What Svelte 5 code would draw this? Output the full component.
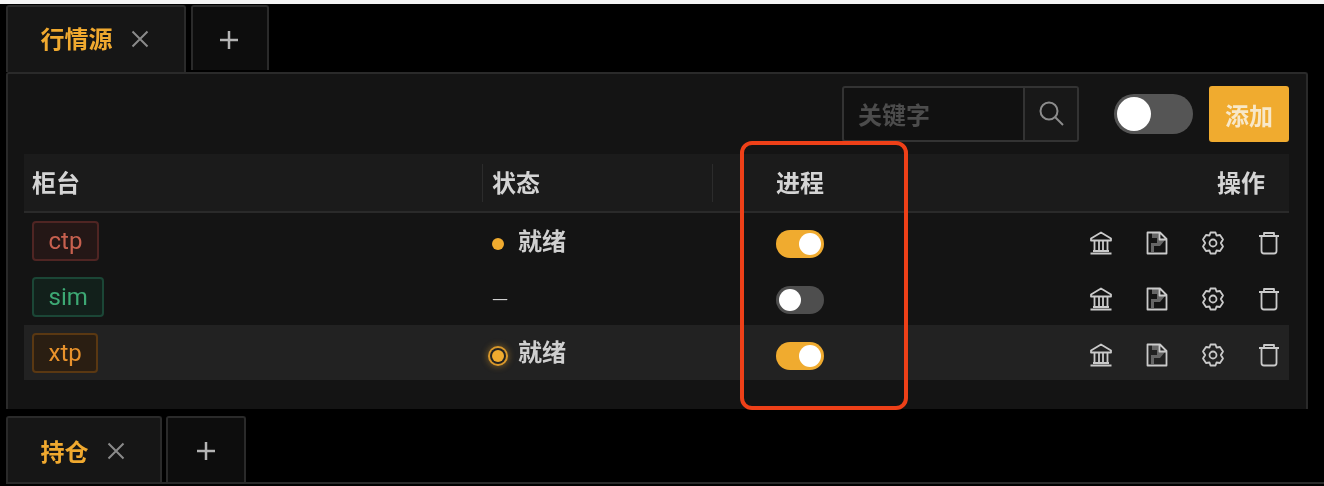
<script>
  const rows = [
    { name: "ctp", tone: "red", status: "ready", on: true },
    { name: "sim", tone: "green", status: "none", on: false },
    { name: "xtp", tone: "orange", status: "active", on: true, hover: true },
  ];
</script>

<div class="page">
  <div class="tabs">
    <div class="tab active first">
      <span class="tab-label">行情源</span>
      <svg class="close" viewBox="0 0 18 18"><path d="M1.500 1.500 16.500 16.500M16.500 1.500 1.500 16.500" /></svg>
    </div>
    <div class="tab add first-add">
      <svg class="plus" viewBox="0 0 20 20"><path d="M10 1V19M1 10H19" /></svg>
    </div>
  </div>

  <section class="panel">
    <div class="toolbar">
      <div class="search">
        <span class="placeholder">关键字</span>
        <span class="search-btn">
          <svg viewBox="0 0 26 26" width="26" height="26"><circle cx="11" cy="11" r="8.500" /><path d="M17 17 25 25" /></svg>
        </span>
      </div>
      <span class="big-switch"><i></i></span>
      <button class="add-btn">添加</button>
    </div>

    <div class="table">
      <div class="row head">
        <div class="cell">柜台</div>
        <div class="cell status sep">状态</div>
        <div class="cell proc sep">进程</div>
        <div class="cell ops-title">操作</div>
      </div>
      {#each rows as r}
        <div class="row body" class:hover={r.hover}>
          <div class="cell"><span class="tag {r.tone}">{r.name}</span></div>
          <div class="cell status">
            {#if r.status === "none"}
              <span class="dash">—</span>
            {:else}
              <span class="dot-box"><i class="dot" class:pulse={r.status === "active"}></i></span>
              <span class="status-text">就绪</span>
            {/if}
          </div>
          <div class="cell proc"><span class="switch" class:on={r.on}><i></i></span></div>
          <div class="cell ops">
            <svg viewBox="0 0 24 24"><path d="M12 1.500 22 7.500V9.500H2V7.500ZM4 20H20M1.500 22.500H22.500M5.500 10V19M10 10V19M14 10V19M18.500 10V19" /></svg>
            <svg viewBox="0 0 24 24"><path class="fill" d="M14 2V8H20V9L15 15H9V21H6V12H12V7H7V2Z" /><path d="M2.500 1.500H15L21.500 8V22.500H2.500ZM14.500 2V8.500H21" /></svg>
            <svg viewBox="0 0 24 24"><path d="M9.500 1.500H14.500L15.500 4.500 19 4 22 8.500 19.800 12 22 15.500 19 20 15.500 19.500 14.500 22.500H9.500L8.500 19.500 5 20 2 15.500 4.200 12 2 8.500 5 4 8.500 4.500Z" /><circle cx="12" cy="12" r="3.500" /></svg>
            <svg viewBox="0 0 24 24"><path d="M4.500 5V20Q4.500 22.500 7 22.500H17Q19.500 22.500 19.500 20V5M2 5H22M7 5V2H17V5" /></svg>
          </div>
        </div>
      {/each}
    </div>
  </section>

  <div class="tabs second">
    <div class="tab active second-tab">
      <span class="tab-label">持仓</span>
      <svg class="close" viewBox="0 0 18 18"><path d="M1.500 1.500 16.500 16.500M16.500 1.500 1.500 16.500" /></svg>
    </div>
    <div class="tab add second-add">
      <svg class="plus" viewBox="0 0 20 20"><path d="M10 1V19M1 10H19" /></svg>
    </div>
  </div>
  <div class="bottom-line"></div>

  <div class="highlight"></div>
</div>

<style>
  :global(body) {
    margin: 0;
    background: #000;
  }

  .page {
    position: relative;
    width: 1324px;
    height: 486px;
    overflow: hidden;
    background: #000;
    border-top: 4px solid #f4f4f4;
    box-sizing: border-box;
    font-family: "Noto Sans CJK SC", "Noto Sans", sans-serif;
    font-size: 24px;
    color: #d8d8d8;
    filter: blur(0.6px);
  }

  .tabs {
    display: flex;
    align-items: flex-start;
    height: 68px;
    padding: 1px 0 0 6px;
    box-sizing: border-box;
  }

  .tab {
    display: flex;
    align-items: center;
    justify-content: center;
    box-sizing: border-box;
    border: 2px solid #2a2a2a;
    border-bottom: none;
    border-radius: 3px 3px 0 0;
    background: #161616;
  }

  .tab.add {
    background: #0d0d0d;
  }

  .first {
    width: 180px;
    height: 67px;
    gap: 18px;
    padding-right: 3px;
  }

  .first-add {
    width: 78px;
    height: 65px;
    margin-left: 5px;
    padding-right: 2px;
  }

  .tab-label {
    color: #f0a92f;
    font-weight: 700;
    line-height: 1;
    margin-top: -3px;
  }

  .close {
    width: 18px;
    height: 18px;
    margin-top: -1px;
  }

  .close path {
    fill: none;
    stroke: #8a8a8a;
    stroke-width: 2;
  }

  .plus {
    width: 20px;
    height: 20px;
    margin-top: 2px;
  }

  .plus path {
    fill: none;
    stroke: #b4b4b4;
    stroke-width: 2.500;
  }

  .panel {
    box-sizing: border-box;
    width: 1302px;
    height: 337px;
    margin-left: 6px;
    padding: 0 17px 0 16px;
    border: 2px solid #2a2a2a;
    border-bottom: none;
    border-radius: 3px 3px 0 0;
    background: #141414;
  }

  .toolbar {
    display: flex;
    align-items: center;
    justify-content: flex-end;
    height: 80px;
    box-sizing: border-box;
  }

  .search {
    display: flex;
    box-sizing: border-box;
    width: 237px;
    height: 56px;
    border: 2px solid #333;
    border-radius: 3px;
    background: #111;
  }

  .placeholder {
    flex: 1;
    padding-left: 14px;
    color: #4c4c4c;
    line-height: 52px;
    font-weight: 700;
  }

  .search-btn {
    display: flex;
    align-items: center;
    justify-content: center;
    width: 52px;
    border-left: 2px solid #333;
    background: #181818;
  }

  .search-btn svg {
    fill: none;
    stroke: #8c8c8c;
    stroke-width: 2;
    margin-top: -3px;
  }

  .big-switch {
    display: block;
    position: relative;
    width: 79px;
    height: 40px;
    margin-left: 35px;
    border-radius: 20px;
    background: #555;
  }

  .big-switch i {
    position: absolute;
    left: 3px;
    top: 3px;
    width: 34px;
    height: 34px;
    border-radius: 50%;
    background: #fff;
  }

  .add-btn {
    width: 80px;
    height: 56px;
    margin-left: 16px;
    padding: 0;
    border: none;
    border-radius: 3px;
    background: #f0ab2f;
    color: #f8e8c8;
    font: 700 24px "Noto Sans CJK SC", sans-serif;
  }

  .table {
    width: 1265px;
  }

  .row {
    display: grid;
    grid-template-columns: 458px 230px 1fr 230px;
    align-items: center;
  }

  .head {
    height: 59px;
    border-bottom: 2px solid #2a2a2a;
    box-sizing: border-box;
    background: #1b1b1b;
    color: #d4d4d4;
    font-weight: 700;
  }

  .body {
    height: 56px;
  }

  .hover {
    background: #222;
    height: 55px;
  }

  .cell {
    padding-left: 8px;
    display: flex;
    align-items: center;
    position: relative;
  }

  .head .cell {
    line-height: 1;
    margin-top: -1px;
  }

  .status {
    padding-left: 10px;
  }

  .proc {
    padding-left: 64px;
  }

  .sep::before {
    content: "";
    position: absolute;
    left: 0;
    top: -6px;
    width: 1px;
    height: 38px;
    background: #2c2c2c;
  }

  .ops-title {
    justify-content: flex-end;
    padding-right: 24px;
  }

  .ops {
    justify-content: flex-end;
    gap: 32px;
    padding-right: 8px;
  }

  .ops svg {
    flex: none;
    width: 24px;
    height: 24px;
    margin-top: 4px;
    fill: none;
    stroke: #cacaca;
    stroke-width: 1.800;
    stroke-linejoin: round;
  }

  .ops svg .fill {
    fill: #666;
    stroke: none;
  }

  .tag {
    box-sizing: border-box;
    display: block;
    height: 40px;
    padding: 0 14.500px;
    border: 2px solid;
    border-radius: 4px;
    line-height: 36px;
    font-family: Roboto, sans-serif;
    font-size: 24px;
  }

  .red {
    color: #c7604f;
    background: #241716;
    border-color: #4f2523;
  }

  .green {
    color: #3da874;
    background: #12201b;
    border-color: #1b4636;
  }

  .orange {
    color: #e8922c;
    background: #2a1e12;
    border-color: #5a3812;
  }

  .dash {
    color: #d0d0d0;
    font-size: 18px;
    line-height: 1;
  }

  .dot-box {
    display: flex;
    align-items: center;
    justify-content: center;
    width: 12px;
    height: 12px;
    margin: 6px 14px 0 0;
  }

  .dot {
    flex: none;
    width: 12px;
    height: 12px;
    border-radius: 50%;
    background: #f0ab2f;
  }

  .pulse {
    box-shadow: 0 0 0 2px #222, 0 0 0 4px #d9982b, 0 0 6px 5px rgba(240, 171, 47, 0.35);
  }

  .status-text {
    font-weight: 700;
    color: #cfcfcf;
    line-height: 1;
    margin-top: -3px;
  }

  .switch {
    display: block;
    position: relative;
    width: 48px;
    height: 28px;
    border-radius: 14px;
    background: #4e4e4e;
    margin-top: 6px;
  }

  .switch i {
    position: absolute;
    left: 3px;
    top: 3px;
    width: 22px;
    height: 22px;
    border-radius: 50%;
    background: #fff;
  }

  .switch.on {
    background: #f0ab2f;
  }

  .switch.on i {
    left: 23px;
  }

  .second {
    margin-top: 6px;
    height: 67px;
  }

  .second-tab {
    width: 156px;
    height: 66px;
    gap: 18px;
    padding: 2px 3px 0 0;
  }

  .second-tab .tab-label {
    margin-top: -1px;
  }

  .second-add {
    width: 80px;
    height: 66px;
    margin-left: 4px;
  }

  .bottom-line {
    height: 2px;
    margin-left: 6px;
    background: #2a2a2a;
  }

  .highlight {
    position: absolute;
    left: 740px;
    top: 137px;
    width: 168px;
    height: 269px;
    box-sizing: border-box;
    border: 4px solid #ee4018;
    border-radius: 12px;
  }
</style>
